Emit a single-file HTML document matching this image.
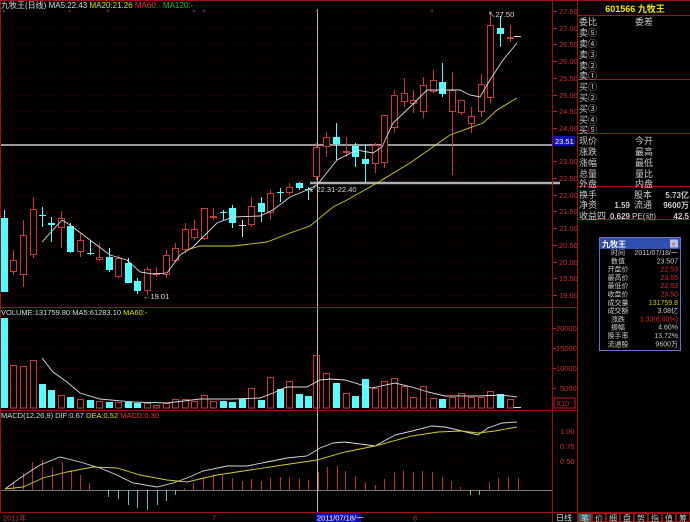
<!DOCTYPE html>
<html><head><meta charset="utf-8"><style>
html,body{margin:0;padding:0;background:#000;width:690px;height:522px;overflow:hidden}
svg{display:block}
text{font-family:"Liberation Sans","Noto Sans CJK SC",sans-serif}
</style></head><body>
<svg id="s" width="690" height="522" xmlns="http://www.w3.org/2000/svg">
<rect width="690" height="522" fill="#000"/>
<g id="grid"></g>
<g id="c"></g>
<g stroke="#a01010" stroke-width="1" fill="none">
<line x1="0.5" y1="0" x2="0.5" y2="513"/>
<line x1="0" y1="0.5" x2="690" y2="0.5"/>
<line x1="552.5" y1="0" x2="552.5" y2="522"/>
<line x1="577.5" y1="0" x2="577.5" y2="522"/>
<line x1="0" y1="307.5" x2="577" y2="307.5"/>
<line x1="0" y1="410.5" x2="577" y2="410.5"/>
<line x1="0" y1="512.5" x2="690" y2="512.5"/>
</g>
<text x="1" y="8" font-size="8" fill="#ddd">九牧王(日线) <tspan fill="#ddd">MA5:22.43</tspan> <tspan fill="#e0e000">MA20:21.26</tspan> <tspan fill="#ff3030">MA60:-</tspan> <tspan fill="#20c020">MA120:-</tspan></text>
<text x="1" y="315" font-size="7.5" fill="#ddd">VOLUME:131759.80 MA5:61283.10 <tspan fill="#e0e000">MA60:-</tspan></text>
<text x="1" y="418" font-size="7.5" fill="#ddd">MACD(12,26,9) DIF:0.67 <tspan fill="#e0e000">DEA:0.52</tspan> <tspan fill="#ff3030">MACD:0.30</tspan></text>
<text x="143" y="299" font-size="7.5" fill="#ddd">←19.01</text>
<text x="309" y="192" font-size="7.5" fill="#ddd">↙22.31-22.40</text>
<text x="488" y="17" font-size="7.5" fill="#ddd">↖27.50</text>
<g id="ax" font-size="7.5" fill="#d03030"></g>
<rect x="553" y="136" width="22" height="10" fill="#1010b0"/>
<text x="555" y="144" font-size="7.5" fill="#fff">23.51</text>
<rect x="554" y="398" width="21" height="10" fill="none" stroke="#c02020"/>
<text x="556" y="406" font-size="7.5" fill="#d03030">X10</text>
<text x="3" y="520.5" font-size="7.5" fill="#d03030">2011年</text>
<text x="212" y="520.5" font-size="7.5" fill="#d03030">7</text>
<rect x="316" y="513" width="45" height="9" fill="#1010b0"/>
<text x="317" y="520.5" font-size="7.5" fill="#fff">2011/07/18/一</text>
<text x="413" y="520.5" font-size="7.5" fill="#d03030">8</text>
<text x="556" y="520.5" font-size="8" fill="#ddd">日线</text>
<g id="tabs"></g>
<g font-size="9" fill="#ccc">
<text x="635" y="12" font-size="9" fill="#f0f000" text-anchor="middle" font-weight="bold">601566 九牧王</text>
<g stroke="#a01010"><line x1="577" y1="15.5" x2="690" y2="15.5"/><line x1="577" y1="79.5" x2="690" y2="79.5"/><line x1="577" y1="133.5" x2="690" y2="133.5"/><line x1="577" y1="186.5" x2="690" y2="186.5"/><line x1="577" y1="219.5" x2="690" y2="219.5"/></g>
<text x="579" y="25">委比</text><text x="635" y="25">委差</text>
<text x="579" y="36">卖⑤</text><text x="579" y="47">卖④</text><text x="579" y="58">卖③</text><text x="579" y="69">卖②</text><text x="579" y="79">卖①</text>
<text x="579" y="90">买①</text><text x="579" y="101">买②</text><text x="579" y="112">买③</text><text x="579" y="123">买④</text><text x="579" y="133">买⑤</text>
<text x="579" y="144">现价</text><text x="635" y="144">今开</text>
<text x="579" y="155">涨跌</text><text x="635" y="155">最高</text>
<text x="579" y="166">涨幅</text><text x="635" y="166">最低</text>
<text x="579" y="177">总量</text><text x="635" y="177">量比</text>
<text x="579" y="187">外盘</text><text x="635" y="187">内盘</text>
<text x="579" y="198">换手</text><text x="634" y="198">股本</text><text x="689" y="198" text-anchor="end" font-size="8" font-weight="bold">5.73亿</text>
<text x="579" y="208">净资</text><text x="630" y="208" text-anchor="end" font-size="8" font-weight="bold">1.59</text><text x="634" y="208">流通</text><text x="689" y="208" text-anchor="end" font-size="8" font-weight="bold">9600万</text>
<text x="579" y="219">收益四</text><text x="630" y="219" text-anchor="end" font-size="8" font-weight="bold">0.629</text><text x="632" y="219" font-size="8">PE(动)</text><text x="689" y="219" text-anchor="end" font-size="8" font-weight="bold">42.5</text>
</g>
<g>
<rect x="599.5" y="237.5" width="81" height="113" fill="#000" stroke="#7070d0"/>
<rect x="600" y="238" width="80" height="11" fill="#3050b0"/>
<text x="602" y="247" font-size="8" fill="#fff" font-weight="bold">九牧王</text>
<rect x="670" y="239.5" width="8" height="8" fill="#c0c0e0"/>
<text x="671.5" y="246.5" font-size="7" fill="#c03030">×</text>
<g id="pop" font-size="7"></g>
</g>
</svg>
<script>
const NS="http://www.w3.org/2000/svg";
function el(p,t,a,txt){const e=document.createElementNS(NS,t);for(const k in a)e.setAttribute(k,a[k]);if(txt!=null)e.textContent=txt;p.appendChild(e);return e;}
const g=document.getElementById('grid'),c=document.getElementById('c'),ax=document.getElementById('ax');
const RED="#d03838",CY="#54ffff";
const pl=[[27.5,11],[27.0,28],[26.5,44],[26.0,61],[25.5,78],[25.0,95],[24.5,111],[24.0,128],[23.0,161],[22.5,178],[22.0,195],[21.5,211],[21.0,228],[20.5,245],[20.0,262],[19.5,278],[19.0,295]];
pl.forEach(([p,y])=>{el(g,'line',{x1:1,x2:552,y1:y+.5,y2:y+.5,stroke:'#400000','stroke-dasharray':'1,2'});el(ax,'line',{x1:553,x2:557,y1:y+.5,y2:y+.5,stroke:'#c02020'});el(ax,'text',{x:559,y:y+3},p.toFixed(2));});
[[20000,328],[15000,348],[10000,368],[5000,388]].forEach(([v,y])=>{el(g,'line',{x1:1,x2:552,y1:y+.5,y2:y+.5,stroke:'#400000','stroke-dasharray':'1,2'});el(ax,'line',{x1:553,x2:556,y1:y+.5,y2:y+.5,stroke:'#c02020'});el(ax,'text',{x:v>=10000?556:560,y:y+3},String(v));});
[[1.00,431],[0.75,446],[0.50,461]].forEach(([v,y])=>{el(g,'line',{x1:1,x2:552,y1:y+.5,y2:y+.5,stroke:'#400000','stroke-dasharray':'1,2'});el(ax,'text',{x:560,y:y+3},v.toFixed(2));});
el(g,'line',{x1:1,x2:552,y1:490.5,y2:490.5,stroke:'#777'});
el(g,'line',{x1:0,x2:560,y1:145,y2:145,stroke:'#9a9a9a','stroke-width':2});
el(g,'line',{x1:310,x2:560,y1:183,y2:183,stroke:'#b0b0b0','stroke-width':2.5});
el(g,'line',{x1:317.5,x2:317.5,y1:9,y2:513,stroke:'#bbb'});
[4,70,108,194,204,317,432].forEach(x=>el(g,'text',{x:x-2,y:13,'font-size':6,fill:'#8050c0'},'×'));
const K=[[4,218,292,210,292,'c'],[13,260,272,250,275,'r'],[23,235,275,220,287,'r'],[33,209,255,197,258,'r'],[42,215,216,207,227,'c'],[51,223,225,217,242,'c'],[61,218,228,211,248,'r'],[70,226,252,223,253,'c'],[80,240,252,233,257,'r'],[90,253,254,240,255,'c'],[99,257,260,243,261,'r'],[109,257,270,248,272,'c'],[118,258,277,255,278,'r'],[128,263,283,258,283,'c'],[137,281,291,278,294,'c'],[147,269,291,267,295,'r'],[156,273,275,267,277,'r'],[166,255,275,250,278,'r'],[175,248,261,243,262,'r'],[185,229,250,223,253,'r'],[194,229,238,220,240,'r'],[204,208,239,208,240,'r'],[213,216,217,208,220,'r'],[223,212,213,210,220,'c'],[232,208,223,205,228,'c'],[242,225,226,220,237,'w'],[251,206,225,197,227,'r'],[261,203,212,197,222,'c'],[270,193,213,190,220,'r'],[280,192,193,188,202,'c'],[289,187,193,183,195,'r'],[299,183,188,182,190,'c'],[308,189,190,187,200,'c'],
[316,147,177,143,180,'r'],[326,137,147,132,157,'r'],[336,137,144,123,160,'c'],[346,151,152,137,157,'r'],[355,146,157,143,167,'c'],[365,159,164,145,182,'c'],[375,145,164,143,173,'r'],[384,115,163,115,168,'r'],[394,95,128,90,133,'r'],[404,93,102,78,107,'r'],[413,100,104,90,113,'r'],[423,85,112,77,118,'r'],[433,80,92,70,93,'r'],[442,82,94,63,97,'c'],[452,90,112,72,175,'r'],[461,100,113,100,115,'r'],[471,116,124,107,133,'r'],[481,84,112,74,117,'r'],[490,25,98,13,103,'r'],[500,28,34,16,47,'c'],[510,37,39,25,42,'r']];
K.forEach(([x,t,b,h,l,k])=>{const col=k=='c'?CY:k=='w'?'#ddd':RED;
 el(c,'line',{x1:x+.5,x2:x+.5,y1:h,y2:l,stroke:col});
 if(k=='c'){el(c,'rect',{x:x-3,y:t,width:7,height:Math.max(1,b-t),fill:CY});}
 else if(k=='w'){el(c,'line',{x1:x-3,x2:x+4,y1:t+.5,y2:t+.5,stroke:col});}
 else{if(b-t<2)el(c,'rect',{x:x-3,y:t,width:7,height:2,fill:RED});else{el(c,'rect',{x:x-2.5,y:t+.5,width:6,height:b-t-1,fill:'#000',stroke:RED});}}});
el(c,'line',{x1:514,x2:521,y1:36.5,y2:36.5,stroke:'#ddd'});
function pline(pts,col){el(c,'polyline',{points:pts.map(p=>p.join(',')).join(' '),fill:'none',stroke:col,'stroke-width':0.9});}
pline([[42,242],[62,220],[70,225],[90,240],[110,255],[127,260],[140,272],[153,274],[167,273],[180,255],[193,247],[203,237],[217,223],[233,217],[260,216],[273,210],[290,197],[307,190],[317,185],[337,160],[357,150],[373,153],[382,147],[393,123],[410,107],[427,90],[443,90],[460,90],[470,95],[480,97],[490,80],[503,60],[517,43]],'#ddd');
pline([[187,250],[200,246],[233,246],[267,242],[290,233],[310,226],[333,207],[347,200],[377,183],[410,163],[450,135],[483,123],[497,110],[517,98]],'#d0d020');
const V=[[4,318,'c'],[13,365,'r'],[23,366,'r'],[33,360,'r'],[42,384,'c'],[51,390,'c'],[61,395,'r'],[70,397,'c'],[80,399,'r'],[90,400,'c'],[99,401,'r'],[109,402,'c'],[118,402,'r'],[128,402,'c'],[137,403,'c'],[147,403,'r'],[156,405,'r'],[166,403,'r'],[175,399,'r'],[185,399,'r'],[194,401,'r'],[204,395,'r'],[213,401,'r'],[223,401,'c'],[232,402,'c'],[242,399,'c'],[251,388,'r'],[261,400,'c'],[270,377,'r'],[280,389,'c'],[289,381,'r'],[299,394,'c'],[308,396,'c'],[316,355,'r'],[326,373,'r'],[336,383,'c'],[346,393,'r'],[355,396,'c'],[365,379,'c'],[375,388,'r'],[384,381,'r'],[394,378,'r'],[404,386,'r'],[413,397,'r'],[423,386,'r'],[433,398,'r'],[442,399,'c'],[452,397,'r'],[461,393,'r'],[471,397,'r'],[481,397,'r'],[490,391,'r'],[500,394,'c'],[510,399,'r']];
V.forEach(([x,t,k])=>{if(k=='c')el(c,'rect',{x:x-3,y:t,width:7,height:408-t,fill:CY});else el(c,'rect',{x:x-2.5,y:t+.5,width:6,height:408-t-.5,fill:'none',stroke:RED});});
el(c,'line',{x1:514,x2:521,y1:407.5,y2:407.5,stroke:'#ddd'});
pline([[42,358],[53,372],[67,382],[80,393],[100,399],[133,402],[167,403],[200,399],[233,399],[260,398],[273,393],[287,387],[307,387],[320,380],[330,379],[345,380],[372,388],[395,383],[412,387],[428,392],[445,396],[478,396],[502,395],[517,397]],'#ddd');
const M=[[13,482],[23,473],[32,462],[42,460],[52,467],[62,462],[71,470],[80,475],[89,483],[108,497],[118,499],[128,505],[137,508],[147,510],[157,505],[166,501],[175,495],[184,488],[193,483],[203,477],[213,474],[222,475],[232,478],[242,481],[251,479],[261,481],[270,478],[280,477],[289,477],[299,478],[308,480],[318,472],[327,467],[337,466],[345,471],[355,476],[365,482],[375,485],[384,479],[394,472],[403,470],[413,472],[422,471],[432,472],[442,477],[451,481],[460,487],[470,495],[479,495],[489,482],[498,478],[508,477],[518,478]];
M.forEach(([x,y])=>el(c,'line',{x1:x+.5,x2:x+.5,y1:490,y2:y,stroke:y>490?'#60c0c0':'#c03030'}));
pline([[5,489],[20,478],[40,465],[60,457],[80,462],[100,468],[117,475],[133,483],[157,487],[173,483],[187,478],[203,471],[227,466],[247,466],[267,462],[287,458],[307,456],[320,448],[333,443],[345,442],[375,446],[395,435],[412,431],[432,426],[445,427],[462,431],[478,435],[488,428],[502,423],[517,422]],'#ddd');
pline([[5,489],[23,487],[43,478],[67,472],[93,467],[117,468],[140,475],[167,480],[187,482],[217,475],[250,470],[283,465],[317,460],[345,452],[375,446],[412,436],[438,432],[462,431],[478,433],[495,431],[517,427]],'#d0d020');
const tb=document.getElementById('tabs');
['笔','价','细','盘','势','指','值','筹'].forEach((t,i)=>{const x=578+i*14;el(tb,'rect',{x:x+.5,y:513.5,width:13,height:8,fill:i==0?'#207070':'#000',stroke:'#a01010'});el(tb,'text',{x:x+3,y:521,'font-size':8,fill:'#ccc'},t);});
const P=document.getElementById('pop');
[['时间','2011/07/18/一','#ccc'],['数值','23.507','#ccc'],['开盘价','22.53','#e03030'],['最高价','23.55','#e03030'],['最低价','22.53','#e03030'],['收盘价','23.50','#e03030'],['成交量','131759.8','#d0d020'],['成交额','3.08亿','#ccc'],['涨跌','1.33(6.00%)','#e03030'],['振幅','4.60%','#ccc'],['换手率','13.72%','#ccc'],['流通股','9600万','#ccc']].forEach(([a,b,col],i)=>{const y=255+i*8.3;el(P,'text',{x:618,y:y,'text-anchor':'middle',fill:'#ccc'},a);el(P,'text',{x:678,y:y,'text-anchor':'end',fill:col},b);});
</script>
</body></html>
